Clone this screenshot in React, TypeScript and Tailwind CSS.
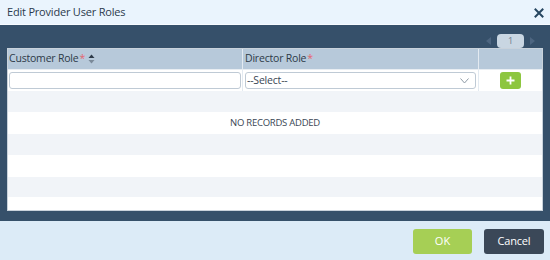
import React from 'react';

const rows = [
  { bg: 'bg-[#f1f4f8]', h: 'h-[21px]', text: '' },
  { bg: 'bg-white', h: 'h-[22px]', text: 'NO RECORDS ADDED' },
  { bg: 'bg-[#f1f4f8]', h: 'h-[21px]', text: '' },
  { bg: 'bg-white', h: 'h-[22px]', text: '' },
  { bg: 'bg-[#f1f4f8]', h: 'h-[20px]', text: '' },
  { bg: 'bg-white', h: 'h-[22px]', text: '' },
];

const App: React.FC = () => {
  return (
    <div className="w-[550px] h-[260px] flex flex-col font-['Open_Sans',sans-serif] text-[#2d3a48] overflow-hidden">
      <div className="h-[25px] shrink-0 bg-[#eaf4fd] border-b border-[#f7fbff] flex items-center justify-between pl-[7px] pr-[6px]">
        <span className="text-[11px] tracking-[-0.2px] text-[#2a3a4c]">Edit Provider User Roles</span>
        <svg width="10" height="10" viewBox="0 0 10 10" className="mt-[1px]">
          <path d="M1.5 1.5 L8.5 8.5 M8.5 1.5 L1.5 8.5" stroke="#274660" strokeWidth="2" strokeLinecap="square" />
        </svg>
      </div>

      <div className="h-[196px] shrink-0 bg-[#36506a] px-[7px] pt-[8px] pb-[10px] flex flex-col">
        <div className="h-[15px] flex items-center justify-end gap-[6px] pr-[8px]">
          <svg width="5" height="8" viewBox="0 0 5 8"><path d="M5 0 L0 4 L5 8 Z" fill="#4d6580" /></svg>
          <div className="w-[27px] h-[14px] rounded-[4px] bg-[#c9d6e2] flex items-center justify-center text-[9px] leading-none text-[#6a7a8a]">1</div>
          <svg width="5" height="8" viewBox="0 0 5 8"><path d="M0 0 L5 4 L0 8 Z" fill="#4d6580" /></svg>
        </div>

        <div className="flex-1 bg-white border border-[#c9d2db] overflow-hidden flex flex-col">
          <div className="h-[20px] shrink-0 bg-[#b7c9da] flex text-[10.5px] tracking-[-0.2px]">
            <div className="w-[235px] flex items-center pl-[1px] border-r border-[#e3eaf1]">
              Customer Role<span className="text-[#e5656f] ml-[1px]">*</span>
              <svg width="7" height="10" viewBox="0 0 7 10" className="ml-[3px]">
                <path d="M0.5 4 L3.5 0.5 L6.5 4 Z" fill="#2d3a48" />
                <path d="M0.5 6 L3.5 9.5 L6.5 6 Z" fill="#7b8a99" />
              </svg>
            </div>
            <div className="w-[236px] flex items-center pl-[2px] border-r border-[#e3eaf1]">
              Director Role<span className="text-[#e5656f] ml-[1px]">*</span>
            </div>
            <div className="flex-1" />
          </div>

          <div className="h-[22px] shrink-0 bg-white flex items-center border-t border-[#e8edf2]">
            <div className="w-[235px] h-full flex items-center pl-[1px] pr-[1px] border-r border-[#e3eaf1]">
              <div className="w-full h-[17px] border border-[#bfcad5] rounded-[3px] bg-white" />
            </div>
            <div className="w-[236px] h-full flex items-center pl-[2px] pr-[2px] border-r border-[#e3eaf1]">
              <div className="w-full h-[17px] border border-[#bfcad5] rounded-[3px] bg-white flex items-center justify-between pl-[1px] pr-[6px] text-[10.5px] tracking-[-0.2px] text-[#3a4654]">
                <span>--Select--</span>
                <svg width="9" height="6" viewBox="0 0 9 6"><path d="M0.5 0.5 L4.5 5 L8.5 0.5" stroke="#8e9aa6" strokeWidth="1" fill="none" /></svg>
              </div>
            </div>
            <div className="flex-1 h-full flex items-center justify-center">
              <button className="w-[21px] h-[17px] rounded-[3px] bg-[#8dc63f] flex items-center justify-center">
                <svg width="9" height="9" viewBox="0 0 9 9"><path d="M4.5 0.5 V8.5 M0.5 4.5 H8.5" stroke="#fff" strokeWidth="1.8" /></svg>
              </button>
            </div>
          </div>

          {rows.map((r, i) => (
            <div key={i} className={`${r.bg} ${r.h} shrink-0 flex items-center justify-center text-[9.5px] tracking-[-0.25px] text-[#3a4654]`}>
              {r.text}
            </div>
          ))}
        </div>
      </div>

      <div className="flex-1 bg-[#dcebf7] flex items-start justify-end gap-[12px] pt-[8px] pr-[6px]">
        <button className="w-[59px] h-[25px] rounded-[3px] bg-[#a6cf55] text-white text-[11px]">OK</button>
        <button className="w-[60px] h-[25px] rounded-[3px] bg-[#3b4858] text-white text-[11px] tracking-[-0.2px]">Cancel</button>
      </div>
    </div>
  );
};

export default App;
